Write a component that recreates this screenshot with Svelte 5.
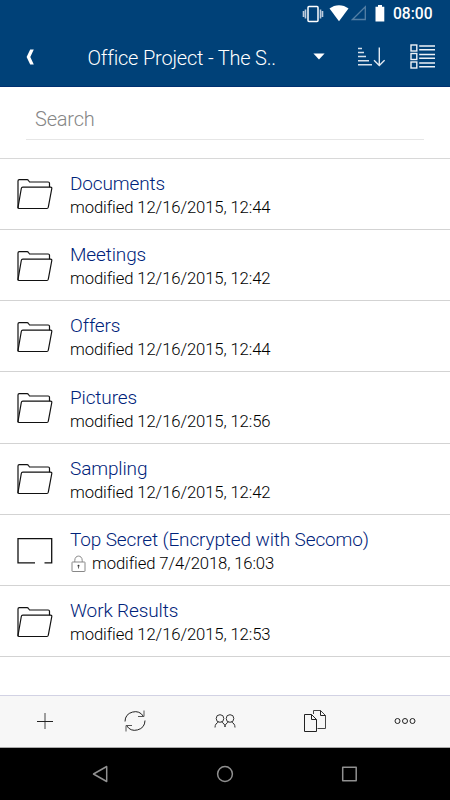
<script lang="ts">
	type Entry = {
		name: string;
		modified: string;
		encrypted?: boolean;
	};

	const entries: Entry[] = [
		{ name: 'Documents', modified: '12/16/2015, 12:44' },
		{ name: 'Meetings', modified: '12/16/2015, 12:42' },
		{ name: 'Offers', modified: '12/16/2015, 12:44' },
		{ name: 'Pictures', modified: '12/16/2015, 12:56' },
		{ name: 'Sampling', modified: '12/16/2015, 12:42' },
		{ name: 'Top Secret (Encrypted with Secomo)', modified: '7/4/2018, 16:03', encrypted: true },
		{ name: 'Work Results', modified: '12/16/2015, 12:53' }
	];

	let search = $state('');
</script>

<div class="screen">
	<div class="status-bar">
		<svg class="vibrate" width="22" height="18" viewBox="0 0 22 18">
			<path d="M1.5 6v6M3.5 4.5v9M18.5 4.5v9M20.5 6v6" stroke="#bccbdc" stroke-width="1.6" fill="none" />
			<rect x="6" y="1.5" width="10" height="15" rx="1" fill="none" stroke="#fff" stroke-width="1.5" />
		</svg>
		<svg class="wifi" width="20" height="17" viewBox="0 0 20 17">
			<path d="M.5 3.6C6-.9 14-.9 19.500 3.600L10 16.300z" fill="#fff" />
		</svg>
		<svg class="signal" width="16" height="16" viewBox="0 0 16 16">
			<path d="M1.500 14.500H14.300V1.700z" fill="none" stroke="#547fa5" stroke-width="1.300" />
		</svg>
		<svg class="battery" width="10" height="17" viewBox="0 0 10 17">
			<path d="M3 0h4v1.800h2.300V16.500H.5V1.800H3z" fill="#fff" />
		</svg>
		<span class="clock">08:00</span>
	</div>

	<header>
		<button class="back" aria-label="Back">
			<svg width="8" height="16" viewBox="0 0 8 16">
				<path d="M4.200.5H7.800L4.300 8l3.500 7.500H4.200L.6 8z" fill="#fff" />
			</svg>
		</button>
		<h1>Office Project - The S..</h1>
		<button class="dropdown" aria-label="Change folder">
			<svg width="12" height="7" viewBox="0 0 12 7">
				<path d="M.4.500h11.200L6 6.500z" fill="#fff" />
			</svg>
		</button>
		<button class="sort" aria-label="Sort">
			<svg width="28" height="20" viewBox="0 0 28 20">
				<path d="M1 1.500h4M1 5.500h6M1 9.500h8M1 13.700h11M1 17.800h14" stroke="#d9e2ec" stroke-width="1.400" fill="none" />
				<path d="M22.300.5V18.500M17 13.200l5.300 5.300 5.300-5.300" stroke="#e3eaf2" stroke-width="1.400" fill="none" />
			</svg>
		</button>
		<button class="view" aria-label="View mode">
			<svg width="26" height="26" viewBox="0 0 26 26">
				<g fill="none" stroke="#eef2f7" stroke-width="1.400">
					{#each [1, 9.500, 18] as y}
						<rect x="1" y={y} width="5.800" height="6" />
						<path d="M9.200 {y + 1}H25M9.200 {y + 4.800}H25" />
					{/each}
				</g>
			</svg>
		</button>
	</header>

	<div class="search">
		<input type="text" placeholder="Search" bind:value={search} />
	</div>

	<ul>
		{#each entries as entry}
			<li>
				{#if entry.encrypted}
					<svg class="icon" width="38" height="34" viewBox="0 0 38 34">
						<path d="M19 27.800H2V3.600H35.700V27.800H28.500" fill="none" stroke="#111" stroke-width="1.300" />
					</svg>
				{:else}
					<svg class="icon" width="38" height="34" viewBox="0 0 38 34">
						<g fill="none" stroke="#111" stroke-width="1.200" stroke-linejoin="round">
							<path d="M2 30.200V3Q2 1.600 3.300 1.600H11Q12 1.600 12.500 2.500L13.500 4H32.200Q33.500 4 33.500 5.200V9.200" />
							<path d="M2 29.500L5.300 10.500Q5.500 9.200 6.800 9.200H34.500Q36 9.200 35.800 10.500L32.300 29.200Q32 30.500 31 30.500H3.200Q2 30.500 2 29.500z" />
						</g>
					</svg>
				{/if}
				<div class="text">
					<div class="name">{entry.name}</div>
					<div class="modified">
						{#if entry.encrypted}
							<svg class="lock" width="16" height="18" viewBox="0 0 16 18">
								<path d="M3.800 7V5.300C3.800-.3 11.200-.3 11.200 5.300V7" fill="none" stroke="#888" />
								<rect x="1" y="7" width="13" height="9.500" rx=".5" fill="none" stroke="#888" />
								<circle cx="7.500" cy="10.800" r="1" fill="#333" />
								<path d="M7.500 11v2.500" stroke="#666" />
							</svg>
						{/if}
						<span>modified {entry.modified}</span>
					</div>
				</div>
			</li>
		{/each}
	</ul>

	<div class="toolbar">
		<button aria-label="Add">
			<svg width="18" height="18" viewBox="0 0 18 18">
				<path d="M9 1v16" stroke="#444" />
				<path d="M1 9.500h16" stroke="#222" />
			</svg>
		</button>
		<button aria-label="Refresh">
			<svg width="24" height="24" viewBox="0 0 24 24" fill="none" stroke="#222">
				<path d="M2 12.500A10 10 0 0 1 20.500 7.500M22 11.500A10 10 0 0 1 3.500 16.500" />
				<path d="M21 1.500V7.500H15M3 22.500V16.500H9" stroke="#555" />
			</svg>
		</button>
		<button aria-label="Members">
			<svg width="22" height="14" viewBox="0 0 22 14" fill="none" stroke="#333">
				<circle cx="6" cy="4.500" r="3.800" />
				<circle cx="16" cy="4.500" r="3.800" />
				<path d="M1 13.500C1 10.500 2.500 9 4.500 8M7.500 8C9.500 9 11 10.500 11 13M11 13C11 10.500 12.500 9 14.500 8M17.500 8C19.500 9 21 10.500 21 13.500" />
			</svg>
		</button>
		<button aria-label="Copy">
			<svg width="24" height="24" viewBox="0 0 24 24" fill="none" stroke="#222">
				<path d="M10.500 5V1.500H17.500L22.500 6.500V19.500H14.500" stroke="#444" />
				<path d="M17.500 1.500V6.500H22.500" />
				<path d="M1.500 5.500H8.500L13.500 10.500V22.500H1.500z" />
				<path d="M8.500 5.500V10.500H13.500" />
			</svg>
		</button>
		<button aria-label="More">
			<svg width="22" height="8" viewBox="0 0 22 8" fill="none" stroke="#222">
				<circle cx="3.500" cy="4" r="2.500" />
				<circle cx="11" cy="4" r="2.500" />
				<circle cx="18.500" cy="4" r="2.500" />
			</svg>
		</button>
	</div>

	<div class="nav-bar">
		<svg width="18" height="18" viewBox="0 0 18 18">
			<path d="M15.700 1.500V16.500L2.500 9z" />
		</svg>
		<svg width="18" height="18" viewBox="0 0 18 18">
			<circle cx="9" cy="9" r="7.400" />
		</svg>
		<svg width="18" height="18" viewBox="0 0 18 18">
			<rect x="1.700" y="2.300" width="13.500" height="13.500" />
		</svg>
	</div>
</div>

<style>
	:global(body) {
		margin: 0;
	}

	.screen {
		display: flex;
		flex-direction: column;
		width: 450px;
		height: 800px;
		overflow: hidden;
		background-color: #fff;
		font-family: Roboto, sans-serif;
		font-weight: 300;
	}

	svg {
		display: block;
		flex: none;
	}

	button {
		display: flex;
		align-items: center;
		justify-content: center;
		padding: 0;
		border: none;
		background: none;
	}

	.status-bar {
		display: flex;
		align-items: center;
		height: 27px;
		padding-left: 302px;
		background-color: #004178;
		color: #fff;
	}

	.wifi {
		margin-left: 5px;
	}

	.signal {
		margin: 0 0 1px 2px;
	}

	.battery {
		margin-left: 8px;
	}

	.clock {
		margin: 1px 0 0 8px;
		font-size: 15.6px;
		line-height: 27px;
		font-weight: 500;
	}

	header {
		display: flex;
		align-items: center;
		box-sizing: border-box;
		height: 60px;
		padding-left: 26px;
		background-color: #004178;
		border-bottom: 1px solid #003070;
		color: #fff;
	}

	h1 {
		width: 225px;
		margin: 2px 0 0 53.5px;
		font-size: 20px;
		line-height: 28px;
		font-weight: 300;
		letter-spacing: -0.2px;
		white-space: nowrap;
	}

	.sort {
		margin-left: 32.5px;
	}

	.view {
		margin-left: 25px;
	}

	.search {
		box-sizing: border-box;
		flex: none;
		height: 70.6px;
		padding: 12px 26px 0;
	}

	input {
		display: block;
		box-sizing: border-box;
		width: 100%;
		height: 41px;
		padding: 0 9px;
		border: none;
		border-bottom: 1px solid #e6e6e6;
		outline: none;
		font: 300 20px Roboto, sans-serif;
		letter-spacing: -0.2px;
	}

	input::placeholder {
		color: #868686;
		opacity: 1;
	}

	ul {
		flex: 1;
		margin: 0;
		padding: 0;
		list-style: none;
		border-top: 1px solid #d8d8d8;
	}

	li {
		display: flex;
		box-sizing: border-box;
		height: 71.25px;
		padding-left: 16px;
		border-bottom: 1px solid #d3d3d3;
	}

	.icon {
		margin-top: 19.7px;
	}

	.text {
		margin: 13.4px 0 0 16px;
	}

	.name {
		font-size: 19px;
		line-height: 24px;
		letter-spacing: -0.13px;
		color: #00237a;
	}

	.modified {
		display: flex;
		align-items: center;
		font-size: 16.7px;
		line-height: 23px;
		letter-spacing: -0.12px;
		color: #000;
	}

	.lock {
		margin: 0 5px 0 1px;
	}

	.toolbar {
		display: flex;
		box-sizing: border-box;
		height: 53px;
		padding-bottom: 1px;
		background-color: #f7f7f7;
		border-top: 1px solid #d2d2e4;
		border-bottom: 1px solid #aaa;
	}

	.toolbar button {
		flex: 1;
	}

	.nav-bar {
		display: flex;
		align-items: center;
		justify-content: center;
		gap: 107px;
		height: 52px;
		background-color: #000;
	}

	.nav-bar svg {
		fill: none;
		stroke: #909090;
		stroke-width: 1.500;
		stroke-linejoin: round;
	}
</style>
